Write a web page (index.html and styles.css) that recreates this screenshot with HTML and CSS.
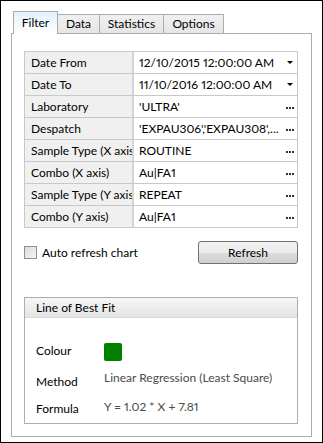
FILE: index.html
```html
<!DOCTYPE html>
<html lang="en">
<head>
    <meta charset="UTF-8">
    <meta name="viewport" content="width=device-width, initial-scale=1.0">
    <title>Chart Settings</title>
    <link rel="stylesheet" href="styles.css">
</head>
<body>
    <div class="window">
        <div class="tabs">
            <div class="tab tab-filter active">Filter</div>
            <div class="tab tab-data">Data</div>
            <div class="tab tab-stats">Statistics</div>
            <div class="tab tab-options">Options</div>
        </div>

        <div class="panel">
            <div class="prop-grid">
                <div class="prop-row">
                    <div class="prop-label">Date From</div>
                    <div class="prop-value">12/10/2015 12:00:00 AM<span class="drop-arrow"></span></div>
                </div>
                <div class="prop-row">
                    <div class="prop-label">Date To</div>
                    <div class="prop-value">11/10/2016 12:00:00 AM<span class="drop-arrow"></span></div>
                </div>
                <div class="prop-row">
                    <div class="prop-label">Laboratory</div>
                    <div class="prop-value">'ULTRA'<span class="ellipsis"></span></div>
                </div>
                <div class="prop-row">
                    <div class="prop-label">Despatch</div>
                    <div class="prop-value">'EXPAU306','EXPAU308',...<span class="ellipsis"></span></div>
                </div>
                <div class="prop-row">
                    <div class="prop-label">Sample Type (X axis)</div>
                    <div class="prop-value">ROUTINE<span class="ellipsis"></span></div>
                </div>
                <div class="prop-row">
                    <div class="prop-label">Combo (X axis)</div>
                    <div class="prop-value">Au|FA1<span class="ellipsis"></span></div>
                </div>
                <div class="prop-row">
                    <div class="prop-label">Sample Type (Y axis)</div>
                    <div class="prop-value">REPEAT<span class="ellipsis"></span></div>
                </div>
                <div class="prop-row">
                    <div class="prop-label">Combo (Y axis)</div>
                    <div class="prop-value">Au|FA1<span class="ellipsis"></span></div>
                </div>
            </div>

            <div class="options-row">
                <label class="check">
                    <span class="check-box"></span>
                    Auto refresh chart
                </label>
                <button class="btn">Refresh</button>
            </div>

            <div class="group">
                <div class="group-header">Line of Best Fit</div>
                <div class="group-body">
                    <div class="fit-row">
                        <div class="fit-label colour-label">Colour</div>
                        <div class="swatch"></div>
                    </div>
                    <div class="fit-row">
                        <div class="fit-label">Method</div>
                        <div class="fit-value">Linear Regression (Least Square)</div>
                    </div>
                    <div class="fit-row">
                        <div class="fit-label formula-label">Formula</div>
                        <div class="fit-value">Y = 1.02 * X + 7.81</div>
                    </div>
                </div>
            </div>
        </div>
    </div>
</body>
</html>
```

FILE: styles.css
```css
body {
    margin: 0;
    padding: 0;
    font-family: 'Segoe UI', Lato, 'Liberation Sans', sans-serif;
    font-size: 12px;
    color: #000000;
    background: #FFFFFF;
    font-variant-numeric: proportional-nums;
}

.window {
    width: 323px;
    height: 443px;
    box-sizing: border-box;
    border: 1px solid #000000;
    background: #FFFFFF;
}

/* tab strip */
.tabs {
    display: flex;
    align-items: flex-end;
    height: 22px;
    margin: 10px 0 0 12px;
}

.tab {
    box-sizing: border-box;
    height: 19px;
    border: 1px solid #ACACAC;
    border-bottom: none;
    background: linear-gradient(to bottom, #F0F0F0, #E5E5E5);
    text-align: center;
    line-height: 18px;
    margin-left: -1px;
}

.tab.active {
    position: relative;
    z-index: 1;
    height: 23px;
    margin-bottom: -1px;
    line-height: 22px;
    background: linear-gradient(to bottom, #E3F1FB, #FFFFFF);
}

.tab-filter { width: 45px; margin-left: 0; }
.tab-data { width: 43px; }
.tab-stats { width: 65px; }
.tab-options { width: 61px; }

/* tab page */
.panel {
    box-sizing: border-box;
    width: 301px;
    height: 404px;
    margin-left: 10px;
    border: 1px solid #ACACAC;
    padding: 17px 13px 0 12px;
}

/* property grid */
.prop-grid {
    border: 1px solid #C8C8C8;
    border-top: none;
}

.prop-row {
    display: flex;
    height: 22px;
    box-sizing: border-box;
    border-top: 1px solid #C8C8C8;
}

.prop-label {
    width: 109px;
    flex-shrink: 0;
    background: #F0F0F0;
    border-right: 2px solid #D4D4D4;
    padding-left: 6px;
    box-sizing: border-box;
    white-space: nowrap;
    overflow: hidden;
    line-height: 21px;
}

.prop-value {
    flex: 1;
    display: flex;
    align-items: center;
    justify-content: space-between;
    padding: 0 0 0 5px;
    white-space: nowrap;
    line-height: 21px;
}

.drop-arrow {
    width: 0;
    height: 0;
    margin-right: 4px;
    border-left: 3px solid transparent;
    border-right: 3px solid transparent;
    border-top: 3px solid #000000;
}

.ellipsis {
    width: 8px;
    height: 2px;
    margin: 2px 3px 0 0;
    background: repeating-linear-gradient(to right, #333333 0 2px, transparent 2px 3px);
}

/* checkbox and button row */
.options-row {
    display: flex;
    justify-content: space-between;
    align-items: center;
    margin-top: 13px;
}

.check {
    display: flex;
    align-items: center;
    gap: 5px;
}

.check-box {
    width: 13px;
    height: 13px;
    box-sizing: border-box;
    border: 1px solid #8E8F8F;
    background: linear-gradient(135deg, #DCDCDC, #F4F4F4);
}

.btn {
    width: 100px;
    height: 23px;
    border: 1px solid #707070;
    border-radius: 3px;
    background: linear-gradient(to bottom, #F2F2F2 0%, #EBEBEB 50%, #DDDDDD 51%, #CFCFCF 100%);
    font-family: inherit;
    font-size: 12px;
    color: #000000;
    padding: 0;
}

/* group box */
.group {
    margin-top: 33px;
    height: 127px;
    box-sizing: border-box;
    border: 1px solid #ADADAD;
}

.group-header {
    height: 20px;
    line-height: 19px;
    padding-left: 11px;
    background: linear-gradient(to bottom, #F7F7F7, #E4E4E4);
    border-bottom: 1px solid #D8D8D8;
    box-sizing: border-box;
}

.group-body {
    display: flex;
    flex-direction: column;
    gap: 9px;
    padding: 25px 0 0 11px;
}

.fit-row {
    display: flex;
    align-items: flex-start;
}

.fit-label {
    width: 68px;
    flex-shrink: 0;
    line-height: 16px;
    padding-top: 4px;
}

.colour-label {
    padding-top: 0;
    line-height: 16px;
}

.formula-label {
    padding-top: 2px;
}

.fit-value {
    color: #4A4A4A;
    line-height: 16px;
}

.swatch {
    width: 18px;
    height: 18px;
    background: #008000;
    border-radius: 2px;
}
```
